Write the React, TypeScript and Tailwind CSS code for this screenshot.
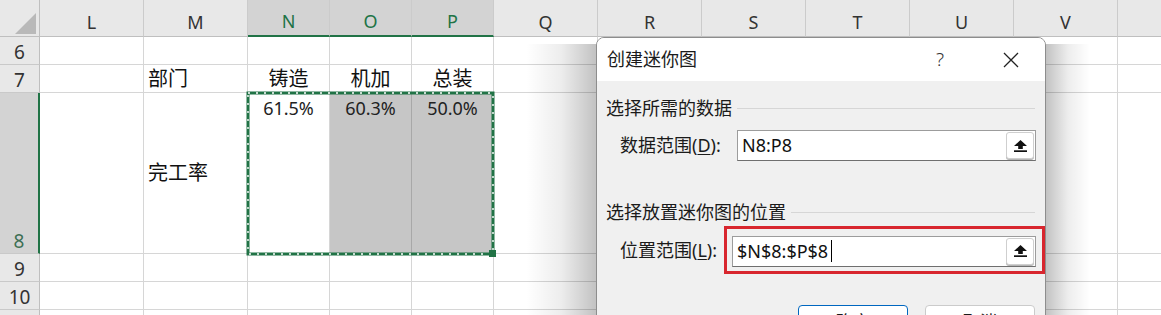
import React from 'react';

const font = "font-['Noto_Sans','Noto_Sans_CJK_SC',sans-serif]";

const cols = ['L', 'M', 'N', 'O', 'P', 'Q', 'R', 'S', 'T', 'U', 'V', 'W'];
const selectedCols = ['N', 'O', 'P'];

const UploadIcon = () => (
  <svg width="13" height="12" viewBox="0 0 13 12">
    <path d="M6.5 0 L13 6 H8.8 V9 H4.2 V6 H0 Z" fill="#111" />
    <rect x="0" y="10.3" width="13" height="1.7" fill="#111" />
  </svg>
);

const RefInput: React.FC<{ value: string; width: string; caret?: boolean }> = ({ value, width, caret }) => (
  <div className={`${width} h-[31px] flex bg-white border border-[#9c9c9c] border-b-[#6f6f6f]`}>
    <div className="flex-1 flex items-center pl-[4px] text-[18px] text-[#111]">
      {value}
      {caret && <span className="ml-[3px] w-px h-[22px] bg-black" />}
    </div>
    <div className="w-[28px] m-[1px] ml-0 flex items-center justify-center bg-white border border-[#cfcfcf] rounded-[3px] shadow-[0_1px_0_#b5b5b5]">
      <UploadIcon />
    </div>
  </div>
);

const Dialog: React.FC = () => (
  <>
    {/* window shadow on both sides */}
    <div className="absolute left-[526px] top-[44px] w-[70px] h-[280px] bg-linear-to-l from-[rgba(0,0,0,0.24)] via-[rgba(0,0,0,0.07)] to-[rgba(0,0,0,0)]" />
    <div className="absolute left-[1046px] top-[44px] w-[44px] h-[280px] bg-linear-to-r from-[rgba(0,0,0,0.24)] via-[rgba(0,0,0,0.07)] to-[rgba(0,0,0,0)]" />
    <div className="absolute left-[596px] top-[37px] w-[450px] h-[320px] rounded-t-[8px] border border-[#8d8d8d] bg-[#f0f0f0] overflow-hidden">
      <div className="h-[43px] bg-white flex items-center pl-[10px] pr-[11px]">
        <span className="flex-1 text-[18px] text-[#1b1b1b]">创建迷你图</span>
        <span className="w-[20px] mr-[38px] text-center text-[19px] font-light text-[#333]">?</span>
        <div className="w-[46px] flex justify-center">
          <svg width="16" height="16" viewBox="0 0 16 16">
            <path d="M1 1 L15 15 M15 1 L1 15" stroke="#222" strokeWidth="1.3" />
          </svg>
        </div>
      </div>

      <div className="pt-[15px]">
        <div className="flex items-center h-[24px]">
          <span className="pl-[9px] text-[18px] text-[#1b1b1b]">选择所需的数据</span>
          <div className="flex-1 h-px bg-[#d6d6d6] ml-[5px] mr-[10px]" />
        </div>
        <div className="flex items-center mt-[10px]">
          <span className="w-[140px] pl-[23px] text-[18px] text-[#1b1b1b]">
            数据范围(<span className="underline underline-offset-2">D</span>):
          </span>
          <RefInput value="N8:P8" width="w-[299px]" />
        </div>

        <div className="flex items-center h-[24px] mt-[39px]">
          <span className="pl-[9px] text-[18px] text-[#1b1b1b]">选择放置迷你图的位置</span>
          <div className="flex-1 h-px bg-[#d6d6d6] ml-[5px] mr-[10px]" />
        </div>
        <div className="flex items-center mt-[2px]">
          <span className="w-[127px] pl-[23px] text-[18px] text-[#1b1b1b]">
            位置范围(<span className="underline underline-offset-2">L</span>):
          </span>
          <div className="w-[321px] h-[48px] border-[3px] border-[#d8262e] flex items-center pl-[5px] pt-[2px]">
            <RefInput value="$N$8:$P$8" width="w-[304px]" caret />
          </div>
        </div>

        <div className="flex mt-[31px] pl-[201px] gap-[17px]">
          <div className="w-[110px] h-[34px] rounded-[4px] bg-white border border-[#0067c0] flex items-center justify-center text-[17px] text-[#1b1b1b]">确定</div>
          <div className="w-[110px] h-[34px] rounded-[4px] bg-white border border-[#cbcbcb] flex items-center justify-center text-[17px] text-[#1b1b1b]">取消</div>
        </div>
      </div>
    </div>
  </>
);

const Cell: React.FC<{ className?: string; children?: React.ReactNode }> = ({ className = '', children }) => (
  <div className={`border-r border-b border-[#d6d6d6] ${className}`}>{children}</div>
);

const RowHead: React.FC<{ n?: string; selected?: boolean }> = ({ n, selected }) => (
  <div
    className={`flex items-end justify-center leading-[24px] text-[19px] border-b border-[#c9c9c9] ${
      selected ? 'bg-[#d3d3d3] text-[#3d6f53] border-r-2 border-r-[#217346]' : 'bg-[#e8e8e8] text-[#333] border-r border-r-[#bfbfbf]'
    }`}
  >
    {n}
  </div>
);

const App: React.FC = () => {
  const emptyRow = (key: string) =>
    cols.map((c) => <Cell key={`${key}-${c}`} />);

  return (
    <div className={`relative w-[1161px] h-[315px] overflow-hidden bg-white ${font}`}>
      <div className="grid grid-cols-[40px_104px_104px_82px_82px_82px_104px_104px_104px_104px_104px_104px_104px] grid-rows-[37px_28px_28px_161px_28px_28px_28px]">
        {/* header row */}
        <div className="relative bg-[#e8e8e8] border-r border-b border-[#bfbfbf]">
          <svg className="absolute left-[15px] top-[13px]" width="21" height="21" viewBox="0 0 21 21">
            <path d="M21 0 V21 H0 Z" fill="#b9b9b9" />
          </svg>
        </div>
        {cols.map((c) => {
          const sel = selectedCols.includes(c);
          return (
            <div
              key={c}
              className={`flex items-end justify-center pb-[2px] leading-[24px] text-[18px] border-r border-r-[#cbcbcb] ${
                sel ? 'bg-[#d3d3d3] text-[#217346] border-b-2 border-b-[#217346]' : 'bg-[#e8e8e8] text-[#333] border-b border-b-[#bfbfbf]'
              }`}
            >
              {c}
            </div>
          );
        })}

        {/* row 6 */}
        <RowHead n="6" />
        {emptyRow('r6')}

        {/* row 7 */}
        <RowHead n="7" />
        {cols.map((c) => {
          const labels: Record<string, string> = { M: '部门', N: '铸造', O: '机加', P: '总装' };
          const text = labels[c];
          return (
            <Cell
              key={`r7-${c}`}
              className={`flex items-end leading-[26px] text-[20px] text-[#111] ${c === 'M' ? 'pl-[4px]' : 'justify-center'}`}
            >
              {text}
            </Cell>
          );
        })}

        {/* row 8 */}
        <RowHead n="8" selected />
        {cols.map((c) => {
          if (c === 'M')
            return (
              <Cell key="r8-M" className="flex items-center pl-[4px] text-[20px] text-[#111]">
                完工率
              </Cell>
            );
          const values: Record<string, string> = { N: '61.5%', O: '60.3%', P: '50.0%' };
          if (values[c])
            return (
              <Cell
                key={`r8-${c}`}
                className={`flex justify-center pt-[3px] text-[18px] leading-[25px] text-[#222] ${
                  c === 'N' ? '' : 'bg-[#c6c6c6] border-r-[#a8a8a8] border-b-[#a8a8a8]'
                }`}
              >
                {values[c]}
              </Cell>
            );
          return <Cell key={`r8-${c}`} />;
        })}

        {/* rows 9-11 */}
        <RowHead n="9" />
        {emptyRow('r9')}
        <RowHead n="10" />
        {emptyRow('r10')}
        <RowHead />
        {emptyRow('r11')}
      </div>

      {/* marching ants around N8:P8 */}
      <svg className="absolute left-[246px] top-[91px]" width="250" height="166" viewBox="0 0 250 166">
        <rect x="2" y="2" width="245" height="161" fill="none" stroke="#217346" strokeWidth="3" />
        <rect x="2" y="2" width="245" height="161" fill="none" stroke="#ffffff" strokeWidth="1.4" strokeDasharray="2 6" />
        <rect x="243" y="159" width="7" height="7" fill="#217346" />
      </svg>

      <Dialog />
    </div>
  );
};

export default App;
